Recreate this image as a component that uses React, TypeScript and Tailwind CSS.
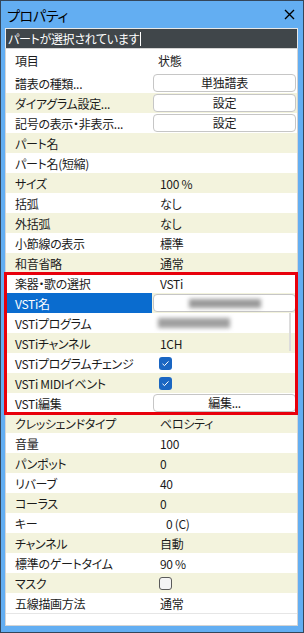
import React from "react";

type Row = {
  label: string;
  kind?: "text" | "button" | "check" | "empty" | "blur-btn" | "blur-text";
  value?: string;
  indent?: boolean;
  checked?: boolean;
};

const rows: Row[] = [
  { label: "譜表の種類...", kind: "button", value: "単独譜表" },
  { label: "ダイアグラム設定...", kind: "button", value: "設定" },
  { label: "記号の表示・非表示...", kind: "button", value: "設定" },
  { label: "パート名", kind: "empty" },
  { label: "パート名(短縮)", kind: "empty" },
  { label: "サイズ", value: "100 %" },
  { label: "括弧", value: "なし" },
  { label: "外括弧", value: "なし" },
  { label: "小節線の表示", value: "標準" },
  { label: "和音省略", value: "通常" },
];

const vstiRows: Row[] = [
  { label: "楽器・歌の選択", value: "VSTi" },
  { label: "VSTi名", kind: "blur-btn" },
  { label: "VSTiプログラム", kind: "blur-text" },
  { label: "VSTiチャンネル", value: "1CH" },
  { label: "VSTiプログラムチェンジ", kind: "check", checked: true },
  { label: "VSTi MIDIイベント", kind: "check", checked: true },
  { label: "VSTi編集", kind: "button", value: "編集..." },
];

const restRows: Row[] = [
  { label: "クレッシェンドタイプ", value: "ベロシティ" },
  { label: "音量", value: "100" },
  { label: "パンポット", value: "0" },
  { label: "リバーブ", value: "40" },
  { label: "コーラス", value: "0" },
  { label: "キー", value: "0 (C)", indent: true },
  { label: "チャンネル", value: "自動" },
  { label: "標準のゲートタイム", value: "90 %" },
  { label: "マスク", kind: "check", checked: false },
  { label: "五線描画方法", value: "通常" },
];

function Check({ checked }: { checked?: boolean }) {
  if (!checked) {
    return <div className="w-[13px] h-[13px] rounded-[3px] border border-[#5a5a5a] bg-[#f4f4f4]" />;
  }
  return (
    <div className="w-[13px] h-[13px] rounded-[3px] bg-[#1a66c2] flex items-center justify-center">
      <svg width="9" height="9" viewBox="0 0 9 9" fill="none">
        <path d="M1.5 4.8 L3.5 6.6 L7.5 2.4" stroke="white" strokeWidth="1" />
      </svg>
    </div>
  );
}

function PropRow({ row, index, selected }: { row: Row; index: number; selected?: boolean }) {
  const beige = index % 2 === 1;
  const kind = row.kind ?? "text";
  return (
    <div className={`flex h-[20px] ${beige ? "bg-[#f3f3dd]" : "bg-white"}`}>
      <div
        className={`w-[146px] shrink-0 pl-[9px] pt-[1px] flex items-center whitespace-nowrap ${
          selected ? "bg-[#0a6ccf] text-white" : ""
        }`}
      >
        {row.label}
      </div>
      <div className="flex-1 flex items-center relative">
        {kind === "text" && (
          <span className={`pt-[1px] ${row.indent ? "pl-[14px]" : "pl-[8px]"}`}>{row.value}</span>
        )}
        {kind === "button" && (
          <div className="h-[18px] flex-1 mx-[1px] rounded-[4px] border border-[#c6c6c6] bg-white flex items-center justify-center">
            {row.value}
          </div>
        )}
        {kind === "blur-btn" && (
          <div className="h-[18px] flex-1 mx-[1px] rounded-[4px] border border-[#c6c6c6] bg-white flex items-center justify-center">
            <div className="w-[72px] h-[9px] bg-[#9a9a9a] blur-[2px]" />
          </div>
        )}
        {kind === "blur-text" && (
          <div className="ml-[6px] w-[72px] h-[10px] bg-[#a0a0a0] blur-[2px]" />
        )}
        {kind === "check" && (
          <div className="pl-[7px]">
            <Check checked={row.checked} />
          </div>
        )}
      </div>
    </div>
  );
}

export default function App() {
  return (
    <div
      className="w-[304px] h-[633px] bg-[#63aef2] border border-[#34465a] flex flex-col text-[12px] tracking-[-0.3px] text-[#1b1b1b] leading-none [font-feature-settings:'palt']"
      style={{ fontFamily: '"Noto Sans CJK JP", "Noto Sans", sans-serif' }}
    >
      {/* Title bar */}
      <div className="h-[27px] shrink-0 flex items-center justify-between pl-[6px] pr-[8px]">
        <span className="text-[14px] text-black">プロパティ</span>
        <svg width="11" height="11" viewBox="0 0 11 11">
          <path d="M1 1 L10 10 M10 1 L1 10" stroke="black" strokeWidth="1.4" />
        </svg>
      </div>

      {/* Search / status bar */}
      <div className="h-[20px] shrink-0 ml-[4px] mr-[5px] bg-[#40464a] border border-[#e8e8e8] border-b-0 flex items-center pl-[2px] text-white text-[12px]">
        <span>パートが選択されています</span>
        <div className="w-[1px] h-[14px] bg-white ml-[1px]" />
      </div>

      {/* Property list */}
      <div className="flex-1 ml-[4px] mr-[5px] bg-white border border-[#d4d4d4] flex flex-col">
        <div className="h-[24px] flex items-center">
          <div className="w-[146px] pl-[9px]">項目</div>
          <div className="pl-[6px]">状態</div>
        </div>
        {rows.map((r, i) => (
          <PropRow key={r.label} row={r} index={i} />
        ))}
        <div className="relative">
          {vstiRows.map((r, i) => (
            <PropRow key={r.label} row={r} index={rows.length + i} selected={i === 1} />
          ))}
          <div className="absolute right-[6px] top-[40px] w-[2px] h-[38px] bg-[#dcdcdc]" />
          <div className="absolute left-[-2px] right-[-1px] top-[-1px] bottom-[-2px] border-[3px] border-[#e8000b] pointer-events-none" />
        </div>
        {restRows.map((r, i) => (
          <PropRow key={r.label + i} row={r} index={rows.length + vstiRows.length + i} />
        ))}
        <div className="border-t border-[#e6e6e6]" />
      </div>
      <div className="h-[6px] shrink-0" />
    </div>
  );
}
